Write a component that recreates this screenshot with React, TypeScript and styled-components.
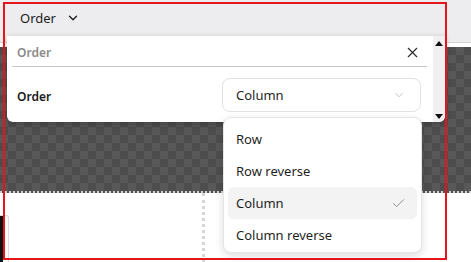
import { createGlobalStyle } from 'styled-components';
import styled from 'styled-components';
import { ChevronDown, X, Check } from 'lucide-react';

const GlobalStyle = createGlobalStyle`
  html, body {
    margin: 0;
    padding: 0;
    overflow: hidden;
    background: #ffffff;
  }
  body {
    font-family: 'Noto Sans', 'Open Sans', sans-serif;
    color: #1f1f1f;
  }
`;

const options = ['Row', 'Row reverse', 'Column', 'Column reverse'];
const selected = 'Column';

const App = () => {
  return (
    <>
      <GlobalStyle />
      <Page>
        <Toolbar>
          <TabButton>
            Order
            <ChevronDown size={14} strokeWidth={2.2} />
          </TabButton>
        </Toolbar>
        <Canvas>
          <Checker />
          <Lower>
            <LeftColumn>
              <StubBox />
            </LeftColumn>
          </Lower>
        </Canvas>

        <Popover>
          <PopoverBody>
            <PopoverHeader>
              <HeaderTitle>Order</HeaderTitle>
              <CloseButton>
                <X size={17} strokeWidth={1.6} />
              </CloseButton>
            </PopoverHeader>
            <FieldRow>
              <FieldLabel>Order</FieldLabel>
              <SelectBox>
                <span>{selected}</span>
                <ChevronDown size={14} strokeWidth={1.4} color="#b8b8b8" />
              </SelectBox>
            </FieldRow>
          </PopoverBody>
          <Scrollbar>
            <Arrow $up />
            <Arrow />
          </Scrollbar>
        </Popover>

        <Menu>
          {options.map((opt) => (
            <MenuItem key={opt} $active={opt === selected}>
              <span>{opt}</span>
              {opt === selected && <Check size={15} strokeWidth={1.3} color="#7a7a7a" />}
            </MenuItem>
          ))}
        </Menu>

        <RedFrame />
      </Page>
    </>
  );
};

export default App;

const Page = styled.div`
  position: relative;
  width: 471px;
  height: 262px;
  display: flex;
  flex-direction: column;
  overflow: hidden;
`;

const Toolbar = styled.div`
  height: 43px;
  flex-shrink: 0;
  background: #ededef;
  border-bottom: 1px solid #d4d4d6;
  padding: 8px 0 0 20px;
  box-sizing: border-box;
  display: flex;
  align-items: flex-start;
`;

const TabButton = styled.div`
  display: flex;
  align-items: center;
  gap: 10px;
  height: 20px;
  font-size: 13px;
  color: #1c1c1c;
`;

const Canvas = styled.div`
  flex: 1;
  display: flex;
  flex-direction: column;
  background: #ffffff;
  padding-top: 4px;
`;

const Checker = styled.div`
  height: 144px;
  flex-shrink: 0;
  background: repeating-conic-gradient(#585858 0 25%, #4d4d4d 0 50%) 0 0 / 16px 16px;
  border-bottom: 2px dotted #cfcfcf;
`;

const Lower = styled.div`
  flex: 1;
  display: flex;
`;

const LeftColumn = styled.div`
  width: 202px;
  border-right: 3px dotted #d6d6d6;
  padding-top: 22px;
`;

const StubBox = styled.div`
  width: 9px;
  height: 60px;
  box-sizing: border-box;
  border: 1px solid #dcdcdc;
  border-left: none;
  border-radius: 0 3px 0 0;
  background: linear-gradient(90deg, #111 0 3px, #fff 3px);
`;

const Popover = styled.div`
  position: absolute;
  left: 7px;
  top: 36px;
  width: 438px;
  height: 86px;
  display: flex;
  background: #ffffff;
  border-radius: 0 0 6px 6px;
  box-shadow: 0 2px 6px rgba(0, 0, 0, 0.25);
  overflow: hidden;
`;

const PopoverBody = styled.div`
  flex: 1;
  padding: 0 6px 0 5px;
  display: flex;
  flex-direction: column;
`;

const PopoverHeader = styled.div`
  height: 27px;
  padding: 3px 0 0 5px;
  box-sizing: content-box;
  display: flex;
  align-items: center;
  justify-content: space-between;
  border-bottom: 1px solid #c9c9c9;
`;

const HeaderTitle = styled.span`
  font-size: 12px;
  font-weight: 600;
  color: #8b8b8b;
`;

const CloseButton = styled.span`
  display: flex;
  color: #2a2a2a;
  margin-right: 6px;
`;

const FieldRow = styled.div`
  display: flex;
  align-items: center;
  justify-content: space-between;
  padding: 11px 6px 0 5px;
`;

const FieldLabel = styled.span`
  font-size: 12px;
  font-weight: 600;
  color: #1a1a1a;
  padding-top: 3px;
`;

const SelectBox = styled.div`
  width: 199px;
  height: 34px;
  box-sizing: border-box;
  border: 1px solid #e2e2e2;
  border-radius: 8px;
  display: flex;
  align-items: center;
  justify-content: space-between;
  padding: 0 14px 0 13px;
  font-size: 13px;
  color: #1f1f1f;
`;

const Scrollbar = styled.div`
  width: 12px;
  background: #f0f0f0;
  display: flex;
  flex-direction: column;
  justify-content: space-between;
  align-items: center;
  padding: 5px 0 3px;
`;

const Arrow = styled.div<{ $up?: boolean }>`
  width: 0;
  height: 0;
  border-left: 4px solid transparent;
  border-right: 4px solid transparent;
  ${({ $up }) =>
    $up ? 'border-bottom: 5px solid #111;' : 'border-top: 5px solid #111;'}
`;

const Menu = styled.div`
  position: absolute;
  left: 223px;
  top: 117px;
  width: 199px;
  height: 136px;
  box-sizing: border-box;
  padding: 5px 4px;
  background: #ffffff;
  border: 1px solid #e6e6e6;
  border-radius: 8px;
  box-shadow: 0 3px 8px rgba(0, 0, 0, 0.14);
  display: flex;
  flex-direction: column;
`;

const MenuItem = styled.div<{ $active?: boolean }>`
  height: 32px;
  flex-shrink: 0;
  display: flex;
  align-items: center;
  justify-content: space-between;
  padding: 0 11px 0 8px;
  border-radius: 6px;
  font-size: 13px;
  color: #1f1f1f;
  background: ${({ $active }) => ($active ? '#f3f3f3' : 'transparent')};
`;

const RedFrame = styled.div`
  position: absolute;
  left: 3px;
  top: 2px;
  width: 444px;
  height: 258px;
  box-sizing: border-box;
  border: 2px solid #e8141c;
  pointer-events: none;
`;
